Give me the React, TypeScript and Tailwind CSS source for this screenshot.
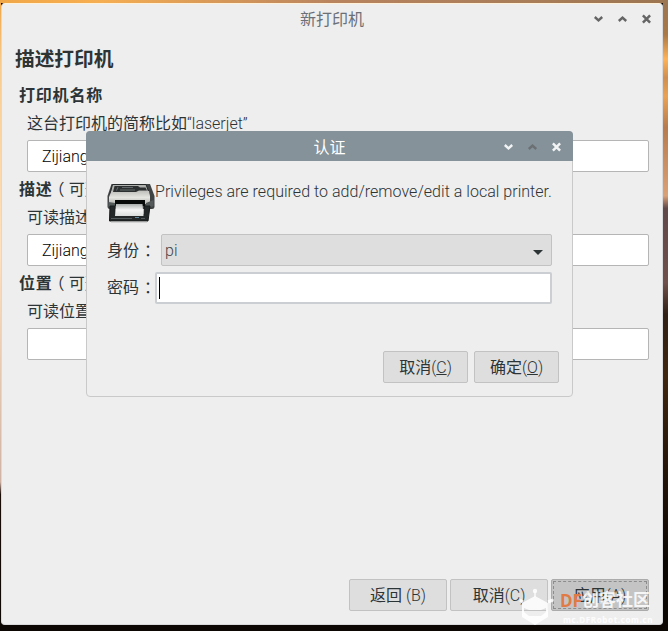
import React from "react";

const WindowControls = ({ color, upColor }: { color: string; upColor: string }) => {
  return (
    <svg width="60" height="10" viewBox="0 0 60 10" fill="none" strokeWidth="2.4">
      <path d="M1.8 3 L5.5 6.4 L9.2 3" stroke={color} />
      <path d="M25.8 7 L29.5 3.6 L33.2 7" stroke={upColor} />
      <path d="M49.9 1.4 L57.1 8.6 M57.1 1.4 L49.9 8.6" stroke={color} strokeWidth="2.5" />
    </svg>
  );
};

const Printer = () => {
  return (
    <svg className="mt-px" width="48" height="46" viewBox="0 0 48 46">
      <defs>
        <linearGradient id="body" x1="0" y1="0" x2="0" y2="1">
          <stop offset="0" stopColor="#bfc0bc" />
          <stop offset="0.5" stopColor="#e4e4e1" />
          <stop offset="1" stopColor="#b4b5b1" />
        </linearGradient>
        <linearGradient id="paper" x1="0" y1="0" x2="0" y2="1">
          <stop offset="0" stopColor="#a9adac" />
          <stop offset="0.5" stopColor="#f5f6f5" />
          <stop offset="1" stopColor="#dcdedd" />
        </linearGradient>
      </defs>
      <path d="M4.5 5 H43 L47.5 17 V28 Q47.5 30 45 30 H3 Q0.5 30 0.5 28 V17 Z" fill="#3f4344" />
      <path d="M5.5 5.5 H39 L42.5 15 H3 Z" fill="#aeb0ad" stroke="#242728" />
      <path d="M4.5 12 H42 L43 17 V25 H2 V18 Z" fill="url(#body)" />
      <path d="M7.5 7 H31 L33 8.5 H38.5 L40 11.5 H32 L29 13 H6 Z" fill="#2d3031" />
      <path d="M11 8 L9.5 11.5 M13 11 H28 M15 8.5 H26" stroke="#62686a" />
      <path d="M1.5 23 L8 24 V30 L1.5 28 Z M46.5 21 L39 24 V30 L46.5 27 Z" fill="#555a5b" />
      <path d="M8 21 H38 V27 H8 Z" fill="#080a0a" />
      <path d="M3 27 H8 L8.5 36 H37 L37.5 27 H43 L41 42 H2.5 Z" fill="#242829" stroke="#171a1b" />
      <path d="M9 25 H35.5 L36.5 37 H8 Z" fill="url(#paper)" />
      <path d="M4 39.5 H25 M34 39.5 H38" stroke="#535a5c" />
      <path d="M28 38.5 H32" stroke="#63899e" />
      <path d="M4 43 H40" stroke="#b9baba" />
    </svg>
  );
};

const Field = ({
  title,
  optional,
  hint,
  example,
  value,
}: {
  title: string;
  optional?: boolean;
  hint: string;
  example?: string;
  value: string;
}) => {
  return (
    <div className="pl-[17px]">
      <div className="flex h-[34px] items-center whitespace-nowrap pt-[2px]">
        <span className="font-bold tracking-[0.8px]">{title}</span>
        {optional && (
          <span>
            <span className="-ml-[4px] mr-[4px]">（</span>可选）
          </span>
        )}
      </div>
      <div className="flex h-[22px] items-center whitespace-nowrap pl-2 pt-[2px]">
        {hint}
        <span className="font-light">{example}</span>
      </div>
      <div className="ml-2 mt-[6px] flex h-8 w-[622px] items-center rounded-[2px] border border-[#b5b5b5] bg-white pl-[14px] pt-[2px] font-light text-black">
        {value}
      </div>
    </div>
  );
};

const Watermark = () => {
  return (
    <div className="pointer-events-none absolute left-[519px] top-[588px] h-9 w-[149px] text-white/85">
      <svg className="absolute left-0 top-0" width="36" height="38" viewBox="0 0 36 38">
        <circle cx="16" cy="3" r="2.2" fill="#fff" fillOpacity="0.85" />
        <path d="M16 3 V9" stroke="#fff" strokeOpacity="0.85" strokeWidth="1.5" />
        <path
          fillRule="evenodd"
          d="M16 8 L29 15 V29 L16 37 L3 29 V15 Z M5 20 V24 L10 28 H22 L27 24 V20 L22 22 H10 Z"
          fill="#fff"
          fillOpacity="0.85"
        />
        <path d="M1 12 L4 14 M34 12 L29 14" stroke="#fff" strokeOpacity="0.85" strokeWidth="3" />
      </svg>
      <div className="absolute left-[41px] top-0 flex h-[26px] items-center whitespace-nowrap text-[17px] font-bold">
        <span className="inline-block w-[22px] font-['Open_Sans'] text-[17px] font-bold text-[#e07b45]">DF</span>
        <span>创客社区</span>
      </div>
      <div className="absolute left-[44px] top-[25px] whitespace-nowrap font-['Open_Sans'] text-[8px] font-bold leading-[14px] tracking-[0.65px]">
        mc.DFRobot.com.cn
      </div>
    </div>
  );
};

const AuthDialog = () => {
  return (
    <div className="absolute left-[86px] top-[131px] flex h-[266px] w-[487px] flex-col rounded-[4px] border border-[#c9c9c9] bg-[#eeeeee]">
      <div className="relative -mx-px -mt-px flex h-[30px] shrink-0 items-center justify-center rounded-t-[4px] bg-[#85929a] pt-[4px] text-white">
        认证
        <div className="absolute right-[10px] top-[11px]">
          <WindowControls color="#f2f3f4" upColor="#6b7073" />
        </div>
      </div>
      <div className="flex h-[73px] pl-5 pt-[17px]">
        <Printer />
        <div className="flex h-[26px] items-center whitespace-nowrap pt-[2px] font-light tracking-[0.03px]">
          Privileges are required to add/remove/edit a local printer.
        </div>
      </div>
      <div className="flex h-8 items-center pl-5">
        <span className="w-[54px] whitespace-nowrap pt-[2px]">
          身份<span className="ml-[5px]">：</span>
        </span>
        <div className="flex h-8 w-[391px] shrink-0 items-center justify-between rounded-[2px] border border-[#c2c2c2] bg-[#dedede] pl-[3px] pr-[8px] pt-[2px] font-light text-[#444]">
          pi
          <svg className="mt-[3px]" width="10" height="5">
            <path d="M0 0 H10 L5 5 Z" fill="#2d3436" />
          </svg>
        </div>
      </div>
      <div className="mt-[6px] flex h-8 items-center pl-5">
        <span className="w-[48px] whitespace-nowrap">
          密码<span className="ml-[5px]">：</span>
        </span>
        <div className="z-10 flex h-8 w-[397px] shrink-0 items-center rounded-[2px] border-2 border-[#cbced2] bg-white pl-[2px]">
          <span className="h-[22px] w-px bg-black"></span>
        </div>
      </div>
      <div className="mt-[47px] flex justify-end gap-[6px] pr-[13px]">
        <button className="h-8 w-[85px] whitespace-nowrap rounded-[2px] border border-[#c2c2c2] bg-[#dedede] pt-[2px]">
          取消
          <span className="font-light">
            (<span className="underline">C</span>)
          </span>
        </button>
        <button className="h-8 w-[85px] whitespace-nowrap rounded-[2px] border border-[#c2c2c2] bg-[#dedede] pt-[2px]">
          确定
          <span className="font-light">
            (<span className="underline">O</span>)
          </span>
        </button>
      </div>
    </div>
  );
};

const App = () => {
  return (
    <div className="relative flex h-[631px] w-[668px] flex-col overflow-hidden bg-[#0d0703] font-[Roboto,'Noto_Sans_CJK_SC',sans-serif] text-[16px] text-[#2d3436]">
      <div className="h-[3px] shrink-0 bg-[linear-gradient(90deg,#f0a748,#f6ae52_15%,#b8835f_50%,#a87d58_80%,#9c7551)]"></div>
      <div className="flex h-[622px] shrink-0">
        <div className="w-px bg-[linear-gradient(180deg,#f0a748,#f8cc8f_10%,#ffe1bf_40%,#d0b3a5_77%,#1a0d08_79%,#0d0703)]"></div>
        <div className="flex w-[662px] flex-col rounded-[4px] border border-[#d9d9db] border-t-[#fff0d8] bg-[#eeeeee]">
          <div className="relative flex h-[31px] items-center justify-center text-[#6b7078]">
            新打印机
            <div className="absolute right-[9px] top-[10px]">
              <WindowControls color="#656565" upColor="#656565" />
            </div>
          </div>
          <div className="mt-[10px] flex h-7 items-center pl-[13px] pt-[2px] text-[19.7px] font-bold">描述打印机</div>
          <div className="mt-[5px]">
            <Field title="打印机名称" hint="这台打印机的简称比如" example="“laserjet”" value="Zijiang" />
            <Field title="描述" optional hint="可读描述" value="Zijiang" />
            <Field title="位置" optional hint="可读位置" value="" />
          </div>
          <div className="mb-[13px] mr-[13px] mt-auto flex justify-end gap-[3px]">
            <button className="h-8 w-[98px] rounded-[2px] border border-[#c2c2c2] bg-[#dedede] pt-[2px]">
              返回 <span className="font-light">(B)</span>
            </button>
            <button className="h-8 w-[98px] rounded-[2px] border border-[#c2c2c2] bg-[#dedede] pt-[2px]">
              取消<span className="font-light">(C)</span>
            </button>
            <button className="h-8 w-[98px] rounded-[2px] border border-[#ababab] bg-[#c4c4c4] p-px">
              <span className="flex h-full items-center justify-center border border-dashed border-[#8c8c8c] pt-[2px]">
                应用<span className="font-light">(A)</span>
              </span>
            </button>
          </div>
        </div>
        <div className="grow bg-[linear-gradient(180deg,#9c7551,#a97845_5%,#ffb257_9%,#cf8f50_12%,#eba253_15%,#b77b4d_20%,#dba176_31%,#604849_33%,#70504b_45%,#302015_50%,#40260f_60%,#251509_75%,#0d0703_90%)]"></div>
      </div>
      <AuthDialog />
      <Watermark />
    </div>
  );
};

export default App;
